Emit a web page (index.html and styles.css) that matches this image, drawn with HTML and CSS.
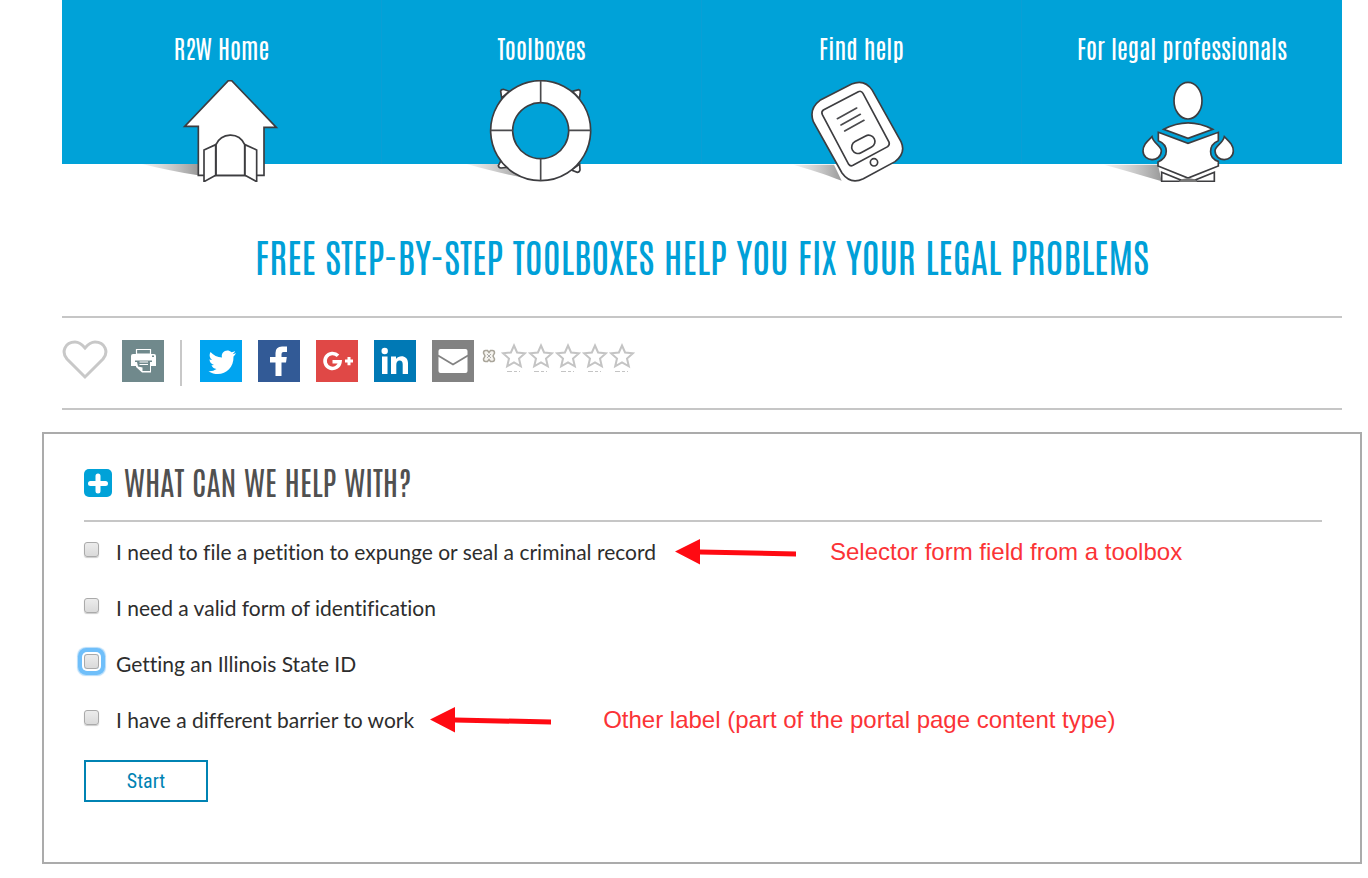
FILE: index.html
```html
<!DOCTYPE html>
<html lang="en">
<head>
<meta charset="utf-8">
<meta name="viewport" content="width=device-width, initial-scale=1">
<title>Free step-by-step toolboxes</title>
<link rel="stylesheet" href="styles.css">
</head>
<body>
<div class="page">
  <nav class="nav" aria-label="Main">
    <a class="nav-item" href="#home">
      <span class="nav-label">R2W Home</span>
      <svg class="nav-icon" viewBox="-9 180 570 306" aria-hidden="true">
        <defs><linearGradient id="shade"><stop offset="0" stop-color="#bbb" stop-opacity=".2"/><stop offset="1" stop-color="#999"/></linearGradient></defs>
        <path d="M36 432H204V466C150 458 90 445 36 432Z" fill="url(#shade)"/>
        <path class="ink" d="M295 182H305L439 322H402V466H205V319H164Z"/>
        <path class="ink" d="M258 466V374C274 338 326 334 344 374V466Z"/>
        <path class="ink" d="M222 390 257 374V466L222 485Z M380 390 345 374V466L380 485Z"/>
      </svg>
    </a>
    <a class="nav-item" href="#toolboxes">
      <span class="nav-label">Toolboxes</span>
      <svg class="nav-icon" viewBox="-9 180 570 306" aria-hidden="true">
        <path d="M50 432H155L225 474C160 462 100 446 50 432Z" fill="url(#shade)"/>
        <path class="ink" d="M155 234 152 213Q153 208 160 208L178 214Z M367 214 386 209Q391 210 391 216L388 236Z M153 422 145 437Q146 444 153 444L172 442Z M389 432 390 450Q388 457 382 457L364 450Z"/>
        <path class="ink" fill-rule="evenodd" d="M272 182A150 150 0 1 1 271.900 182Z M272 248A84 84 0 1 0 272.100 248Z"/>
        <path class="line" d="M272 182V248 M272 415V482 M122 331H189 M356 331H422"/>
      </svg>
    </a>
    <a class="nav-item" href="#help">
      <span class="nav-label">Find help</span>
      <svg class="nav-icon" viewBox="-9 180 570 306" aria-hidden="true">
        <path d="M70 434H192L215 482C165 463 110 445 70 434Z" fill="url(#shade)"/>
        <path class="ink" d="M150 241 245 192Q284 176 307 211L393 365Q409 399 375 425L280 476Q242 495 216 459L130 305Q116 266 150 241Z"/>
        <path class="ink" d="M160 270 265 215Q274 211 279 220L357 366Q360 374 353 380L249 436Q241 440 236 433L157 284Q153 275 160 270Z"/>
        <path class="line thick" d="M202 296 260 264 M213 315 271 283 M224 333 282 301"/>
        <rect class="ink" x="243" y="354" width="74" height="38" rx="19" transform="rotate(-28 280 373)"/>
        <circle class="ink" cx="312" cy="427" r="11"/>
      </svg>
    </a>
    <a class="nav-item" href="#professionals">
      <span class="nav-label">For legal professionals</span>
      <svg class="nav-icon" viewBox="81 180 570 306" aria-hidden="true">
        <path d="M132 434H294L305 484Q210 455 132 434Z" fill="url(#shade)"/>
        <ellipse class="ink" cx="384" cy="242" rx="42" ry="55"/>
        <path class="ink" d="M311 328Q384 289 458 328L384 355Z"/>
        <path class="ink" d="M295 337 384 370 475 337V362C444 375 444 415 475 424V438L384 474 294 438V426C328 410 326 375 295 362Z"/>
        <path class="ink" d="M276 350C262 364 249 374 249 393C250 427 302 428 304 393C304 377 281 372 276 350Z M493 350C507 364 520 374 520 393C519 427 467 428 465 393C465 377 488 372 493 350Z"/>
        <path class="ink" d="M305 457 372 484H305Z M463 457 396 484H463Z"/>
        <path d="M365 478 384 474 405 478 412 486H356Z" fill="#777"/>
      </svg>
    </a>
  </nav>

  <h1 class="title">Free step-by-step toolboxes help you fix your legal problems</h1>

  <div class="share">
    <button class="plain" type="button" aria-label="Save to favorites">
      <svg width="46" height="42" viewBox="0 0 46 42"><path d="M23 37 5 19C-1 12 3 2 13 2Q18 2 23 8Q28 2 33 2C43 2 47 12 41 19Z" fill="none" stroke="#c8c8c8" stroke-width="3"/></svg>
    </button>
    <button class="plain tile print" type="button" aria-label="Print">
      <svg viewBox="0 0 42 42"><path d="M14.500 9.500H28.500V14H14.500Z" fill="none" stroke="#fff" stroke-width="1.200"/><path fill="#fff" d="M11 14H32Q34 14 34 16V26H29V32.500H20L14 27V26H9V16Q9 14 11 14Z"/><path fill="#70898c" d="M30 15.500H32V17H30Z M13 20.500H30V22H28V31H20.500V27.500L16 26.500 15 22H13Z"/><path fill="#fff" d="M17.500 21.500H26V22.500H17.500Z M17.500 24H26V25H17.500Z"/></svg>
    </button>
    <span class="divider"></span>
    <div class="networks">
      <a class="tile twitter" href="#twitter" aria-label="Twitter"><svg viewBox="0 0 42 42"><path fill="#fff" d="M36 13Q34.500 14 32.500 14.200Q34.500 13 35.200 11Q33.500 12 31.500 12.300C27.500 8 20.500 11.500 22 17.500Q15 17 10.500 12Q8 16.500 12 20Q10.500 20 9.500 19.300Q9.500 23.500 14 25Q12.500 25.300 11.500 25Q12.500 28.500 16.500 29Q13 31.500 8.500 31.200C20 38.500 34 31 33.500 16.500Q35 15 36 13Z"/></svg></a>
      <a class="tile facebook" href="#facebook" aria-label="Facebook"><svg viewBox="0 0 42 42"><path fill="#fff" d="M17.500 36V22.500H12V17H17.500V13Q17.500 6.500 24 6.500H29V12H25.500Q23.500 12 23.500 14V17H28.800L28 22.500H23.500V36Z"/></svg></a>
      <a class="tile google" href="#google" aria-label="Google Plus"><svg viewBox="0 0 42 42"><path d="M22 15.800A7.500 7.500 0 1 0 24 21.800H16.500" fill="none" stroke="#fff" stroke-width="3.600"/><path fill="#fff" d="M31.500 17H34.500V19.500H37V22.500H34.500V25.200H31.500V22.500H29V19.500H31.500Z"/></svg></a>
      <a class="tile linkedin" href="#linkedin" aria-label="LinkedIn"><svg viewBox="0 0 42 42"><circle cx="10.700" cy="11" r="3.200" fill="#fff"/><path fill="#fff" d="M8 16.500H13.500V34H8Z M17 16.500H22V19C25 14.500 34 15 34 23V34H28.700V24.500Q28.700 20.500 25.700 20.500Q22.300 20.500 22.300 25V34H17Z"/></svg></a>
      <a class="tile email" href="#email" aria-label="Email"><svg viewBox="0 0 42 42"><rect x="6.500" y="9" width="29" height="24" rx="2" fill="#fff"/><path d="M6 15.500 21 24.500 36 15.500" fill="none" stroke="#828282" stroke-width="1.800"/></svg></a>
    </div>
    <div class="rating">
      <button class="plain clear" type="button" aria-label="Clear rating"><svg width="14" height="14" viewBox="0 0 14 14"><path d="M3.500 1.500H5.500L7 3.500 8.500 1.500H10.500Q12.500 1.500 12.500 4L11 7 12.500 10Q12.500 12.500 10.500 12.500H8.500L7 10.500 5.500 12.500H3.500Q1.500 12.500 1.500 10L3 7 1.500 4Q1.500 1.500 3.500 1.500Z" fill="#f6f4ef" stroke="#a9a59a" stroke-width="1.500"/><path d="M5 5 9 9M9 5 5 9" stroke="#aaa" stroke-width="1"/></svg></button>
      <button class="plain star" type="button" aria-label="Rate 1 star"><svg viewBox="0 0 26 30"><path d="M13 2.500 16.100 9.500 24 10.300 18 15.600 19.800 23.300 13 19.300 6.200 23.300 8 15.600 2 10.300 9.900 9.500Z"/><path class="dash" d="M6 28.500H11M13 28.500H16M18 28.500H19"/></svg></button>
      <button class="plain star" type="button" aria-label="Rate 2 stars"><svg viewBox="0 0 26 30"><path d="M13 2.500 16.100 9.500 24 10.300 18 15.600 19.800 23.300 13 19.300 6.200 23.300 8 15.600 2 10.300 9.900 9.500Z"/><path class="dash" d="M6 28.500H11M13 28.500H16M18 28.500H19"/></svg></button>
      <button class="plain star" type="button" aria-label="Rate 3 stars"><svg viewBox="0 0 26 30"><path d="M13 2.500 16.100 9.500 24 10.300 18 15.600 19.800 23.300 13 19.300 6.200 23.300 8 15.600 2 10.300 9.900 9.500Z"/><path class="dash" d="M6 28.500H11M13 28.500H16M18 28.500H19"/></svg></button>
      <button class="plain star" type="button" aria-label="Rate 4 stars"><svg viewBox="0 0 26 30"><path d="M13 2.500 16.100 9.500 24 10.300 18 15.600 19.800 23.300 13 19.300 6.200 23.300 8 15.600 2 10.300 9.900 9.500Z"/><path class="dash" d="M6 28.500H11M13 28.500H16M18 28.500H19"/></svg></button>
      <button class="plain star" type="button" aria-label="Rate 5 stars"><svg viewBox="0 0 26 30"><path d="M13 2.500 16.100 9.500 24 10.300 18 15.600 19.800 23.300 13 19.300 6.200 23.300 8 15.600 2 10.300 9.900 9.500Z"/><path class="dash" d="M6 28.500H11M13 28.500H16M18 28.500H19"/></svg></button>
    </div>
  </div>

  <form class="panel">
    <h2 class="panel-title">
      <svg width="28" height="28" viewBox="0 0 28 28" aria-hidden="true"><rect width="28" height="28" rx="5" fill="#00a2d8"/><path d="M14 7V22M6.500 14.500H21.500" stroke="#fff" stroke-width="5" stroke-linecap="round"/></svg>
      <span>What can we help with?</span>
    </h2>
    <div class="options">
      <div class="option">
        <input class="check" type="checkbox" id="expunge"><label for="expunge">I need to file a petition to expunge or seal a criminal record</label>
        <span class="note"><svg class="arrow" viewBox="0 0 121 26"><path d="M0 12.500 25 0V10.500L121 12.500V17.500L25 15.500V25.500Z"/></svg>Selector form field from a toolbox</span>
      </div>
      <div class="option">
        <input class="check" type="checkbox" id="identification"><label for="identification">I need a valid form of identification</label>
      </div>
      <div class="option">
        <input class="check current" type="checkbox" id="state-id"><label for="state-id">Getting an Illinois State ID</label>
      </div>
      <div class="option">
        <input class="check" type="checkbox" id="barrier"><label for="barrier">I have a different barrier to work</label>
        <span class="note wide"><svg class="arrow" viewBox="0 0 121 26"><path d="M0 12.500 25 0V10.500L121 12.500V17.500L25 15.500V25.500Z"/></svg>Other label (part of the portal page content type)</span>
      </div>
    </div>
    <button class="start" type="button">Start</button>
  </form>
</div>
</body>
</html>
```
FILE: styles.css
```css
* { box-sizing: border-box; }

body {
  margin: 0;
  background: #fff;
  color: #2d2d2d;
  font-family: Lato, "Open Sans", sans-serif;
}

.page { padding: 0 26px 14px 62px; }

.nav {
  display: grid;
  grid-template-columns: repeat(4, 1fr);
  background: #00a2d8;
}

.nav-item {
  display: flex;
  flex-direction: column;
  align-items: center;
  gap: 17px;
  padding-top: 31px;
  border-right: 1px solid #0a9fd5;
  color: #fff;
  text-decoration: none;
}

.nav-item:last-child { border-right: 0; }

.nav-label {
  font: 500 25px/32px "Antonio", "Roboto Condensed", sans-serif;
}

.nav-icon {
  width: 190px;
  height: 102px;
  margin-bottom: -18px;
}

.ink { fill: #fff; stroke: #3d3d40; stroke-width: 5; }
.line { fill: none; stroke: #4a4a4d; stroke-width: 5; }
.thick { stroke-linecap: round; }

.title {
  margin: 0;
  padding: 62px 0 32px;
  color: #00a0d8;
  font: 500 39px/58px "Antonio", "Roboto Condensed", sans-serif;
  text-align: center;
  text-transform: uppercase;
}

.share {
  display: flex;
  align-items: flex-start;
  gap: 16px;
  padding: 22px 0;
  border-top: 2px solid #c6c6c6;
  border-bottom: 2px solid #c6c6c6;
}

.plain {
  padding: 0;
  border: 0;
  background: none;
  line-height: 0;
}

.tile { display: block; width: 42px; height: 42px; }
.tile svg { display: block; width: 42px; height: 42px; }
.print { background: #70898c; margin-left: -2px; }
.twitter { background: #00a4f0; }
.facebook { background: #325a96; }
.google { background: #e04846; }
.linkedin { background: #0079b5; }
.email { background: #828282; }

.divider { width: 2px; height: 46px; background: #c8c8c8; }

.networks { display: flex; gap: 16px; padding-left: 2px; }

.rating { display: flex; align-items: flex-start; margin-left: -8px; }
.clear { margin: 9px 4px 0 0; }
.star { width: 27px; padding-top: 3px; }
.star svg { width: 26px; height: 30px; fill: none; stroke: #c4c4c4; stroke-width: 2; }
.star .dash { stroke-width: 1; }

.panel {
  margin: 22px -20px 0;
  padding: 20px 38px 60px 40px;
  border: 2px solid #ababab;
}

.panel-title {
  display: flex;
  align-items: center;
  gap: 12px;
  margin: 0;
  padding-bottom: 12px;
  border-bottom: 2px solid #c6c6c6;
  color: #505050;
  font: 400 32px/54px "Antonio", "Roboto Condensed", sans-serif;
  text-transform: uppercase;
}

.panel-title svg { margin-top: 4px; }

.options { padding-top: 2px; }

.option {
  display: flex;
  align-items: center;
  height: 56px;
  font-size: 21px;
  line-height: 28px;
  font-variant-ligatures: no-common-ligatures;
}

.check {
  appearance: none;
  flex: none;
  width: 15px;
  height: 15px;
  margin: 0 17px 5px 0;
  border: 1px solid #aaa;
  border-radius: 3px;
  background: linear-gradient(#ececec, #dadada);
  box-shadow: 0 1px 1px #ccc;
}

.current { box-shadow: 0 0 0 2px #fff, 0 0 0 6px #6fbffa, 0 0 1px 7px #b5dcfa; }

.note {
  display: flex;
  align-items: center;
  gap: 34px;
  margin-left: 19px;
  color: #fb3336;
  font: 24px/28px "Liberation Sans", Arial, sans-serif;
}

.wide { gap: 52px; margin-left: 16px; }

.arrow { width: 121px; height: 26px; fill: #ff0a12; }

.start {
  display: block;
  width: 124px;
  height: 42px;
  margin-top: 12px;
  border: 2px solid #0083b3;
  background: #fff;
  color: #0083b3;
  font: 20px/28px "Roboto Condensed", "Liberation Sans", sans-serif;
}
```
